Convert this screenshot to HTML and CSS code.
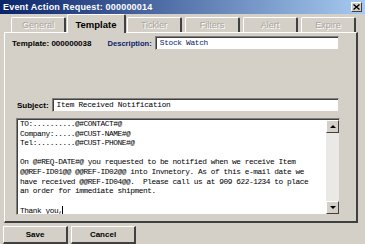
FILE: index.html
```html
<!DOCTYPE html>
<html lang="en">
<head>
  <meta charset="UTF-8" />
  <title>Event Action Request</title>
  <link rel="stylesheet" href="styles.css">
</head>
<body>
  <div class="window">

    <!-- Title bar -->
    <div class="titlebar">
      <span class="title">Event Action Request: 000000014</span>
      <span class="close">
        <svg width="7" height="6" viewBox="0 0 7 6"><path d="M0.5 0.5 L6.5 5.5 M6.5 0.5 L0.5 5.5" stroke="#000" stroke-width="1.4"/></svg>
      </span>
    </div>

    <!-- Tabs -->
    <div class="tabs">
      <div class="tab off">General</div>
      <div class="tab active">Template</div>
      <div class="tab off">Tickler</div>
      <div class="tab off">Filters</div>
      <div class="tab off">Alert</div>
      <div class="tab off">Expire</div>
    </div>

    <!-- Tab page -->
    <div class="panel">
      <div class="row head-row">
        <span class="lbl tmpl">Template: 000000038</span>
        <span class="lbl navy">Description:</span>
        <div class="field desc">Stock Watch</div>
      </div>

      <div class="row subject-row">
        <span class="lbl">Subject:</span>
        <div class="field subject">Item Received Notification</div>
      </div>

      <div class="memo">
        <div class="memo-text">TO:..........@#CONTACT#@
Company:.....@#CUST-NAME#@
Tel:.........@#CUST-PHONE#@

On @#REQ-DATE#@ you requested to be notified when we receive Item
@@REF-ID01@@ @@REF-ID02@@ into Invnetory. As of this e-mail date we
have received @@REF-ID04@@.  Please call us at 909 622-1234 to place
an order for immediate shipment.

Thank you,<span class="caret"></span></div>
        <div class="scrollbar">
          <div class="sb-btn"><span class="arrow up"></span></div>
          <div class="sb-track"></div>
          <div class="sb-btn"><span class="arrow down"></span></div>
        </div>
      </div>
    </div>

    <!-- Buttons -->
    <div class="buttons">
      <div class="btn">Save</div>
      <div class="btn">Cancel</div>
    </div>

  </div>
</body>
</html>
```

FILE: styles.css
```css
:root {
  --face: #d4d0c8;
  --light: #ffffff;
  --shadow: #808080;
  --dark: #404040;
  --navy: #0a246a;
}

body {
  margin: 0;
  background-color: var(--face);
  font-family: 'Liberation Sans', Arial, sans-serif;
}

.window {
  width: 365px;
  height: 244px;
  background-color: var(--face);
  overflow: hidden;
}

.titlebar {
  height: 14px;
  background: linear-gradient(to right, #0a246a, #a6caf0);
  display: flex;
  align-items: center;
  justify-content: space-between;
  padding: 0 3px 0 3px;
}

.title {
  color: #fff;
  font-weight: bold;
  font-size: 9px;
  letter-spacing: 0.2px;
}

.close {
  width: 9px;
  height: 8px;
  background-color: var(--face);
  border: 1px solid;
  border-color: var(--light) var(--dark) var(--dark) var(--light);
  display: flex;
  align-items: center;
  justify-content: center;
}

/* Tabs */
.tabs {
  display: flex;
  align-items: flex-end;
  height: 18px;
  padding-left: 11px;
}

.tab {
  width: 52px;
  height: 14px;
  margin-right: 3px;
  border-top: 1px solid var(--light);
  border-left: 1px solid var(--light);
  border-right: 2px solid var(--dark);
  border-radius: 2px 2px 0 0;
  display: flex;
  align-items: center;
  justify-content: center;
  font-size: 9px;
}

.tab.off {
  color: #a8a49d;
  text-shadow: 1px 1px 0 #fff;
}

.tab.active {
  width: 56px;
  height: 18px;
  margin: 0 1px 0 -2px;
  font-weight: bold;
  font-size: 9.5px;
  position: relative;
  top: 1px;
  background-color: var(--face);
}

/* Tab page */
.panel {
  margin-left: 4px;
  width: 351px;
  height: 185px;
  border-top: 1px solid var(--light);
  border-left: 1px solid var(--light);
  border-right: 2px solid var(--dark);
  border-bottom: 2px solid var(--dark);
  padding-top: 3px;
}

.row {
  display: flex;
  align-items: center;
  height: 14px;
}

.lbl {
  font-weight: bold;
  font-size: 8px;
}

.lbl.navy {
  color: var(--navy);
  font-size: 7.6px;
}

.field {
  height: 12px;
  background-color: #fff;
  border-top: 1px solid var(--shadow);
  border-left: 1px solid var(--shadow);
  border-bottom: 1px solid var(--face);
  border-right: 1px solid var(--face);
  box-shadow: inset 1px 1px 0 var(--dark);
  font-family: 'Liberation Mono', 'Courier New', monospace;
  font-size: 7.8px;
  letter-spacing: -0.3px;
  line-height: 12px;
  padding-left: 4px;
  box-sizing: content-box;
}

.head-row {
  padding-left: 7px;
}

.head-row .navy {
  margin-left: 16px;
}

.desc {
  margin-left: 3px;
  width: 178px;
  color: var(--navy);
}

.subject-row {
  margin-top: 48px;
  padding-left: 12px;
}

.subject {
  margin-left: 3px;
  width: 281px;
}

/* Message body */
.memo {
  display: flex;
  margin: 6px 0 0 11px;
  width: 322px;
  height: 95px;
  background-color: #fff;
  border-top: 1px solid var(--shadow);
  border-left: 1px solid var(--shadow);
  border-bottom: 1px solid var(--face);
  border-right: 1px solid var(--face);
  box-shadow: inset 1px 1px 0 var(--dark);
}

.memo-text {
  flex: 1;
  white-space: pre;
  font-family: 'Liberation Mono', 'Courier New', monospace;
  font-size: 7.8px;
  letter-spacing: -0.44px;
  line-height: 9.6px;
  padding: 1px 0 0 3px;
  overflow: hidden;
}

.caret {
  display: inline-block;
  width: 1px;
  height: 9px;
  background-color: #000;
  vertical-align: -2px;
}

.scrollbar {
  width: 13px;
  display: flex;
  flex-direction: column;
  margin: 1px 0 0 0;
}

.sb-btn {
  height: 11px;
  background-color: var(--face);
  border-top: 1px solid var(--light);
  border-left: 1px solid var(--light);
  border-right: 1px solid var(--dark);
  border-bottom: 1px solid var(--dark);
  display: flex;
  align-items: center;
  justify-content: center;
}

.sb-track {
  flex: 1;
  background-color: #ebe9e5;
}

.arrow {
  width: 0;
  height: 0;
  border-left: 3px solid transparent;
  border-right: 3px solid transparent;
}

.arrow.up {
  border-bottom: 3px solid #000;
}

.arrow.down {
  border-top: 3px solid #000;
}

/* Buttons */
.buttons {
  display: flex;
  gap: 3px;
  padding: 3px 0 0 3px;
}

.btn {
  width: 62px;
  height: 15px;
  border-top: 1px solid var(--light);
  border-left: 1px solid var(--light);
  border-right: 2px solid var(--dark);
  border-bottom: 2px solid var(--dark);
  display: flex;
  align-items: center;
  justify-content: center;
  font-weight: bold;
  font-size: 8px;
}
```
